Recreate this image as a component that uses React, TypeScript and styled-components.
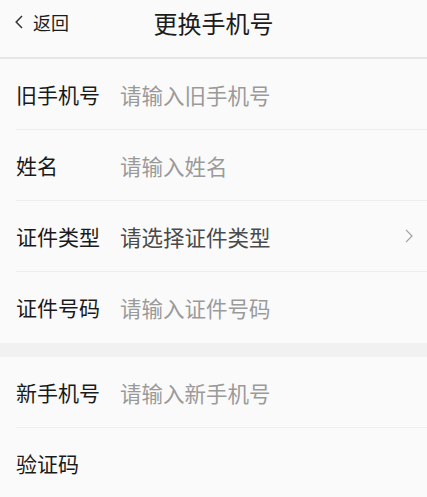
import React from 'react';
import styled, { createGlobalStyle } from 'styled-components';

const GlobalStyle = createGlobalStyle`
  html, body {
    margin: 0;
    padding: 0;
    background: #fafafa;
    font-family: "Noto Sans CJK SC", "Noto Sans", sans-serif;
  }
`;

const Page = styled.div`
  width: 427px;
  min-height: 497px;
  background: #fafafa;
`;

const Header = styled.div`
  position: relative;
  height: 44px;
  padding-bottom: 13px;
  display: flex;
  align-items: center;
  justify-content: center;
  border-bottom: 2px solid #e6e6e6;
`;

const Back = styled.div`
  position: absolute;
  left: 15px;
  top: 0;
  height: 44px;
  display: flex;
  align-items: center;
  gap: 10px;
  font-size: 18px;
  color: #1c1c1c;
`;

const Title = styled.div`
  font-size: 24px;
  color: #1c1c1c;
`;

const Group = styled.div`
  padding-left: 16px;
`;

const Row = styled.div<{ $last?: boolean }>`
  height: 70px;
  display: flex;
  align-items: center;
  border-bottom: 1px solid ${(p) => (p.$last ? 'transparent' : '#eeeeee')};
`;

const Label = styled.div`
  width: 104px;
  flex-shrink: 0;
  font-size: 21px;
  color: #1a1a1a;
`;

const Field = styled.input`
  flex: 1;
  min-width: 0;
  border: none;
  outline: none;
  background: transparent;
  font-family: inherit;
  font-size: 21.5px;
  color: #1a1a1a;
  padding: 0;
  &::placeholder {
    color: #9a9a9a;
  }
`;

const Select = styled.div`
  flex: 1;
  display: flex;
  align-items: center;
  justify-content: space-between;
  padding-right: 14px;
  font-size: 21.5px;
  color: #4a4a4a;
`;

const Spacer = styled.div`
  height: 14px;
  background: #f1f1f1;
`;

const rowsTop = [
  { label: '旧手机号', placeholder: '请输入旧手机号' },
  { label: '姓名', placeholder: '请输入姓名' },
];

export default function App() {
  return (
    <Page>
      <GlobalStyle />
      <Header>
        <Back>
          <svg width="8" height="14" viewBox="0 0 8 14">
            <path d="M7 1 L1.2 7 L7 13" fill="none" stroke="#333" strokeWidth="1.5" />
          </svg>
          返回
        </Back>
        <Title>更换手机号</Title>
      </Header>
      <Group>
        {rowsTop.map((r) => (
          <Row key={r.label}>
            <Label>{r.label}</Label>
            <Field placeholder={r.placeholder} />
          </Row>
        ))}
        <Row>
          <Label>证件类型</Label>
          <Select>
            请选择证件类型
            <svg width="8" height="14" viewBox="0 0 8 14">
              <path d="M1 0.8 L7 7 L1 13.2" fill="none" stroke="#a0a0a0" strokeWidth="1.2" />
            </svg>
          </Select>
        </Row>
        <Row $last>
          <Label>证件号码</Label>
          <Field placeholder="请输入证件号码" />
        </Row>
      </Group>
      <Spacer />
      <Group>
        <Row>
          <Label>新手机号</Label>
          <Field placeholder="请输入新手机号" />
        </Row>
        <Row $last>
          <Label>验证码</Label>
          <Field />
        </Row>
      </Group>
    </Page>
  );
}
